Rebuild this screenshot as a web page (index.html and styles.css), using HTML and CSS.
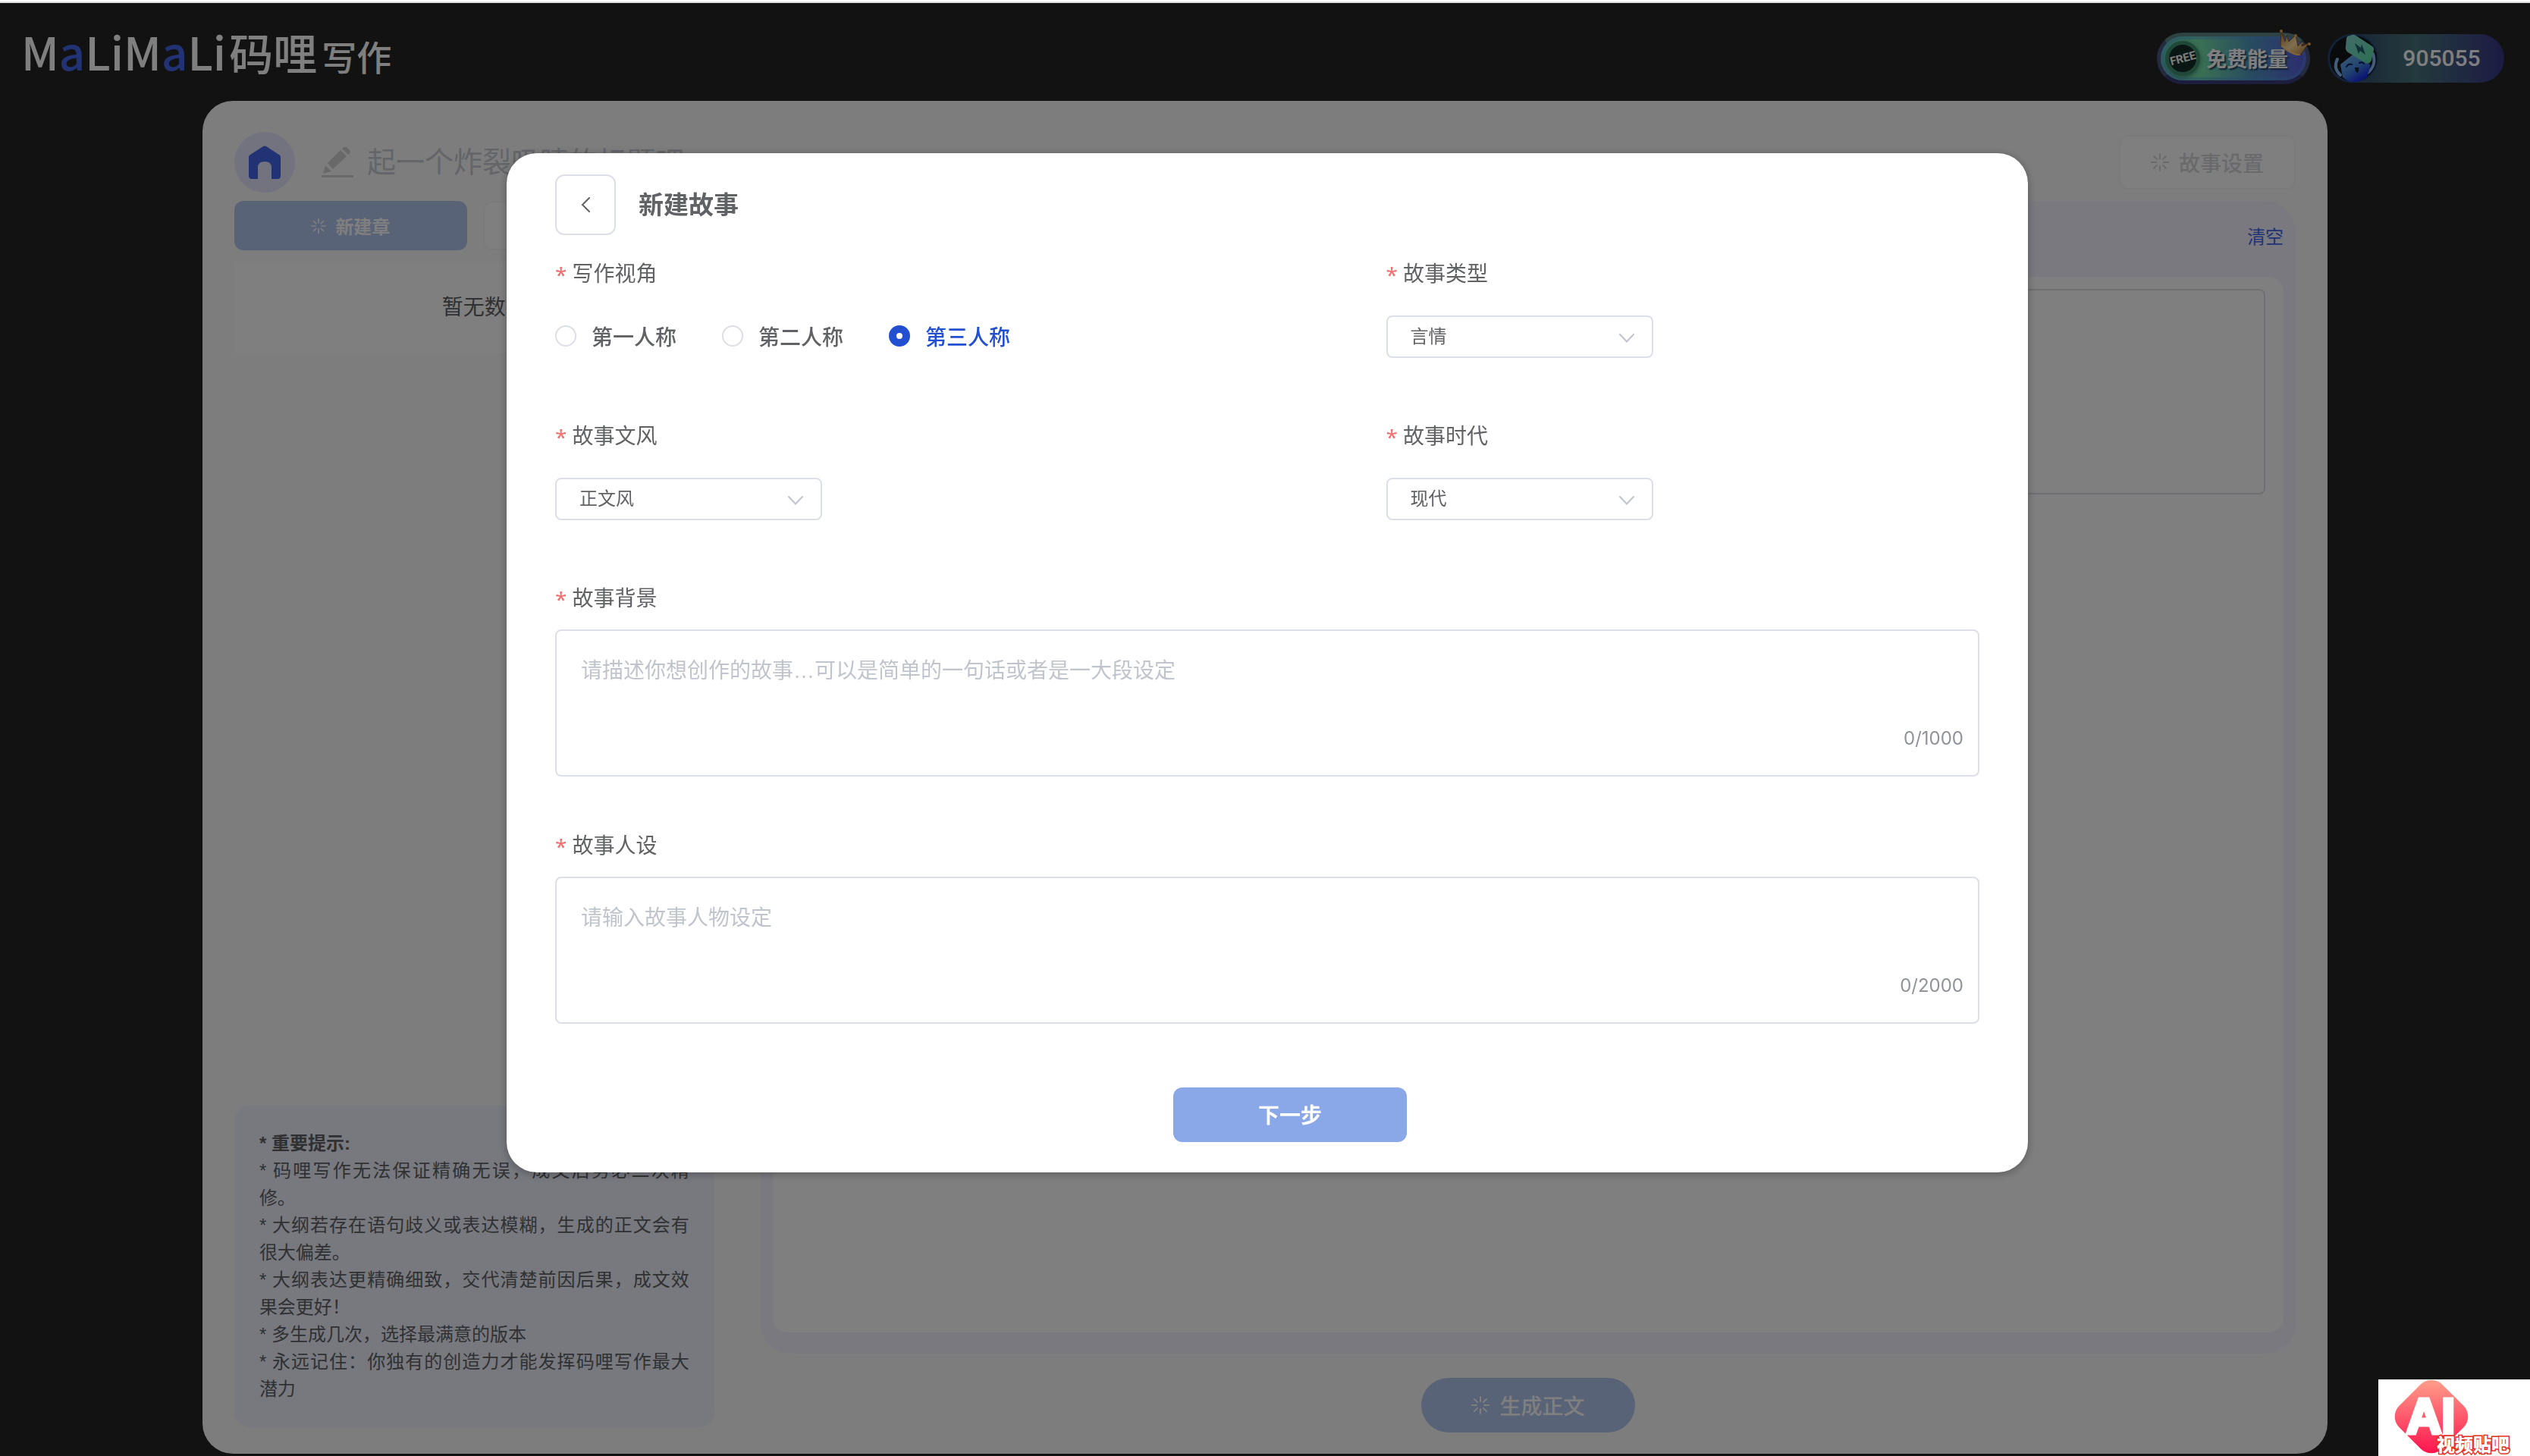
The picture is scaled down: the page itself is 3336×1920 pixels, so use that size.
FILE: index.html
```html
<!DOCTYPE html>
<html lang="zh-CN">
	<head>
		<meta charset="utf-8" />
		<meta name="viewport" content="width=device-width,initial-scale=1.0" />
		<title>码哩写作</title>
		<link rel="stylesheet" href="styles.css">
	</head>
	<body>
		<!-- 转圈图标，按钮共用 -->
		<svg class="defs" width="0" height="0" aria-hidden="true">
			<symbol id="loading" viewBox="0 0 24 24">
				<path d="M12 1v6M12 17v6M1 12h6M17 12h6M4 4l4 4M16 16l4 4M20 4l-4 4M8 16l-4 4" fill="none" stroke="currentColor" stroke-width="2" stroke-linecap="round" />
			</symbol>
			<symbol id="arrow" viewBox="0 0 20 12">
				<path d="M1 1l9 9.500l9-9.500" fill="none" stroke="currentColor" stroke-width="2" stroke-linecap="round" />
			</symbol>
		</svg>
		<div class="top-line"></div>

		<header class="header">
			<h1 class="logo">M<b>a</b>LiM<b>a</b>Li<span class="logo-cn">码哩</span><span class="logo-sub">写作</span></h1>
			<div class="header-right">
				<button class="free" type="button">
					<span class="free-coin"><span class="free-word">FREE</span></span>
					<span class="free-text">免费能量</span>
					<svg class="crown" viewBox="0 0 42 34" aria-hidden="true">
						<defs>
							<linearGradient id="gold" x1="0" y1="0" x2="1" y2="1">
								<stop offset="0" stop-color="#b87c38" />
								<stop offset="0.5" stop-color="#ffe0a0" />
								<stop offset="1" stop-color="#b06c28" />
							</linearGradient>
						</defs>
						<path d="M2 20L3 3l5 13l2-9l3 9l9-9l3 15l5-6l0 6l9-4l-11 16q-14-2-26-14z" fill="url(#gold)" stroke="#8a5420" />
						<path d="M3 21q11 11 25 13" fill="none" stroke="#ffc878" stroke-width="2" />
						<g fill="#e8a858"><circle cx="3" cy="2" r="2" /><circle cx="22" cy="8" r="2" /><circle cx="40" cy="19" r="2" /><circle cx="9" cy="7" r="1" /><circle cx="31" cy="18" r="1" /></g>
					</svg>
				</button>
				<div class="energy">
					<svg class="avatar" viewBox="0 0 68 64" aria-hidden="true">
						<defs>
							<linearGradient id="face" x1="0" y1="0" x2="0.700" y2="1">
								<stop offset="0" stop-color="#78b8e8" />
								<stop offset="0.550" stop-color="#4488e0" />
								<stop offset="1" stop-color="#1020e8" />
							</linearGradient>
							<linearGradient id="card" x1="0" y1="0" x2="1" y2="1">
								<stop offset="0" stop-color="#88d8d8" />
								<stop offset="1" stop-color="#58e0a0" />
							</linearGradient>
						</defs>
						<ellipse cx="34" cy="32" rx="32" ry="31" fill="#101418" stroke="#244878" stroke-width="2" />
						<path d="M13 33q-6 12 4 21M60 26q5 15-7 25" fill="none" stroke="#88b8f0" stroke-width="4" stroke-linecap="round" />
						<path d="M17 40L32 28q4-2 8 1l15 10q2 2 1 5l-4 13q-18 12-32 0z" fill="url(#face)" />
						<path d="M25 5q1-3 5-3q4-3 9 1l20 13q3 2 2 5l-3 13q-2 6-8 4L27 24q-4-3-3-8z" fill="url(#card)" />
						<path d="M36 12l8 6l1-5l5 14l-7-5l-2 4z" fill="#206070" />
						<path d="M25 43q3-5 7-3M42 38q4-2 6 1" fill="none" stroke="#102060" stroke-width="2" stroke-linecap="round" />
						<path d="M36 44l5 0q1 6-2 7q-3-2-3-7z" fill="#102030" />
					</svg>
					<span class="energy-num">905055</span>
				</div>
			</div>
		</header>

		<main class="page">
			<div class="title-row">
				<a class="home" href="#" aria-label="首页">
					<svg viewBox="0 0 44 44" aria-hidden="true">
						<path d="M1 15q0-2 2-3L20 1q2-1 4 0l17 11q2 1 2 3v25q0 4-4 4h-8V29q0-8-9-8t-9 8v15H5q-4 0-4-4z" fill="#4266ea" />
					</svg>
				</a>
				<svg class="pencil" viewBox="0 0 42 42" aria-hidden="true">
					<path d="M2 36L5 25l8 8zM8 22L25 5l8 8L15 30zM27 3q4-4 7-1l3 3q2 4-2 6z" fill="#d2d2d2" />
					<path d="M0 38h42v3H0z" fill="#d2d2d2" />
				</svg>
				<input class="title-input" type="text" aria-label="标题" placeholder="起一个炸裂吸睛的标题吧">
				<button class="btn-plain" type="button" disabled><svg class="load"><use href="#loading" /></svg>故事设置</button>
			</div>

			<div class="columns">
				<aside class="side">
					<div class="side-btns">
						<button class="btn-new" type="button" disabled><svg class="load"><use href="#loading" /></svg>新建章</button>
						<div class="side-blank"></div>
					</div>
					<div class="empty">暂无数据</div>
					<div class="tips">
						<p><strong>* 重要提示:</strong></p>
						<p>* 码哩写作无法保证精确无误，成文后务必二次精修。</p>
						<p>* 大纲若存在语句歧义或表达模糊，生成的正文会有很大偏差。</p>
						<p>* 大纲表达更精确细致，交代清楚前因后果，成文效果会更好！</p>
						<p>* 多生成几次，选择最满意的版本</p>
						<p>* 永远记住：你独有的创造力才能发挥码哩写作最大潜力</p>
					</div>
				</aside>
				<section class="work">
					<div class="editor">
						<div class="editor-head"><a href="#">清空</a></div>
						<div class="editor-body">
							<textarea class="editor-text" aria-label="正文"></textarea>
						</div>
					</div>
					<button class="btn-make" type="button" disabled><svg class="load"><use href="#loading" /></svg>生成正文</button>
				</section>
			</div>
		</main>

		<!-- 新建故事弹窗 -->
		<div class="mask">
			<form class="dialog" role="dialog" aria-labelledby="dialog-title">
				<div class="dialog-head">
					<button class="back" type="button" aria-label="返回">
						<svg viewBox="0 0 12 20" aria-hidden="true"><path d="M11 1L2 10l9 9" fill="none" stroke="currentColor" stroke-width="2" stroke-linecap="round" /></svg>
					</button>
					<h2 id="dialog-title">新建故事</h2>
				</div>

				<div class="fields">
					<fieldset class="field">
						<legend class="label">写作视角</legend>
						<div class="radios">
							<label class="radio"><input type="radio" name="view">第一人称</label>
							<label class="radio"><input type="radio" name="view">第二人称</label>
							<label class="radio"><input type="radio" name="view" checked>第三人称</label>
						</div>
					</fieldset>
					<div class="field">
						<label class="label" for="type">故事类型</label>
						<div class="select">
							<select id="type"><option>言情</option></select>
							<svg class="arrow"><use href="#arrow" /></svg>
						</div>
					</div>
					<div class="field">
						<label class="label" for="style">故事文风</label>
						<div class="select">
							<select id="style"><option>正文风</option></select>
							<svg class="arrow"><use href="#arrow" /></svg>
						</div>
					</div>
					<div class="field">
						<label class="label" for="era">故事时代</label>
						<div class="select">
							<select id="era"><option>现代</option></select>
							<svg class="arrow"><use href="#arrow" /></svg>
						</div>
					</div>
				</div>

				<div class="long-fields">
					<div>
						<label class="label" for="background">故事背景</label>
						<div class="area">
							<textarea id="background" maxlength="1000" placeholder="请描述你想创作的故事…可以是简单的一句话或者是一大段设定"></textarea>
							<span class="count">0/1000</span>
						</div>
					</div>
					<div>
						<label class="label" for="people">故事人设</label>
						<div class="area">
							<textarea id="people" maxlength="2000" placeholder="请输入故事人物设定"></textarea>
							<span class="count">0/2000</span>
						</div>
					</div>
				</div>

				<button class="btn-next" type="button">下一步</button>
			</form>
		</div>

		<svg class="watermark" viewBox="0 0 200 101" role="img" aria-label="AI视频贴吧">
			<defs>
				<linearGradient id="red" x1="0" y1="0" x2="1" y2="1">
					<stop offset="0.100" stop-color="#ff9a88" />
					<stop offset="0.900" stop-color="#ff1850" />
				</linearGradient>
			</defs>
			<rect width="200" height="101" fill="#fff" />
			<rect x="30" y="9" width="80" height="80" rx="20" fill="url(#red)" transform="rotate(45 70 49)" />
			<text class="mark-ai" x="37" y="71">AI</text>
			<text class="mark-name" x="77" y="95">视频贴吧</text>
		</svg>
	</body>
</html>
```

FILE: styles.css
```css
* {
	padding: 0;
	margin: 0;
	box-sizing: border-box;
}

body {
	display: flex;
	flex-direction: column;
	min-height: 100vh;
	background: #242424;
	color: #606266;
	font-family: "Liberation Sans", "Noto Sans CJK SC", sans-serif;
	font-size: 28px;
}

button, input, select, textarea {
	font-family: inherit;
	color: inherit;
}

button {
	display: flex;
	align-items: center;
	justify-content: center;
	border: none;
}

a {
	text-decoration: none;
}

.defs {
	position: absolute;
}

.top-line {
	height: 4px;
	background: #e0e0e0;
	border-top: 2px solid #fff;
}

/* 顶部 */
.header {
	display: flex;
	align-items: center;
	justify-content: space-between;
	height: 129px;
	padding: 16px 34px 0 28px;
}

.logo {
	display: flex;
	align-items: baseline;
	height: 88px;
	color: #fff;
	font: 500 60px/68px "Noto Sans CJK SC", sans-serif;
}

.logo b {
	color: #4266ea;
	font-weight: 500;
}

.logo-cn {
	margin-left: 4px;
	font-size: 58px;
}

.logo-sub {
	margin-left: 6px;
	font-size: 46px;
}

.header-right {
	display: flex;
	align-items: center;
	gap: 23px;
}

.free {
	position: relative;
	justify-content: flex-start;
	width: 202px;
	height: 68px;
	padding-left: 6px;
	gap: 8px;
	border: 5px solid #4a6080;
	border-color: #5e8486 #4a5880 #3a3a7a;
	border-radius: 34px;
	background: linear-gradient(90deg, #66d8c8, #74e0a8 28%, #5098c0 62%, #5a5ae0);
	box-shadow: inset 0 0 0 4px rgba(80, 150, 220, 0.4);
}

.free-coin {
	display: flex;
	align-items: center;
	justify-content: center;
	width: 46px;
	height: 46px;
	border: 5px solid #409070;
	border-radius: 50%;
	background: #142c28;
	box-shadow: 0 2px 6px rgba(0, 0, 0, 0.4);
}

.free-word {
	color: #fff;
	font: 700 15px/18px Roboto, sans-serif;
	transform: rotate(-15deg);
}

.free-text {
	color: #fff;
	font-size: 27px;
	font-weight: 700;
	text-shadow: 2px 2px 2px #204060;
}

.crown {
	position: absolute;
	top: -9px;
	right: -6px;
	width: 42px;
	height: 34px;
}

.energy {
	display: flex;
	align-items: center;
	width: 233px;
	height: 64px;
	border-radius: 32px;
	background: linear-gradient(90deg, #283c60, #48747c 50%, #383688);
}

.avatar {
	width: 68px;
	height: 64px;
}

.energy-num {
	flex: 1;
	color: #fff;
	font: 500 30px/40px Roboto, sans-serif;
	text-align: center;
}

/* 主体 */
.page {
	flex: 1;
	display: flex;
	flex-direction: column;
	margin: 0 8% 3px;
	padding: 41px 42px 28px;
	border-radius: 40px;
	background: #fbfbfb;
}

.title-row {
	display: flex;
	align-items: center;
	margin-bottom: 11px;
}

.home {
	display: flex;
	align-items: center;
	justify-content: center;
	width: 80px;
	height: 80px;
	margin-right: 35px;
	border-radius: 50%;
	background: #e6e4ff;
}

.home svg {
	width: 44px;
	height: 44px;
}

.pencil {
	width: 42px;
	height: 42px;
	margin-right: 18px;
}

.title-input {
	flex: 1;
	height: 60px;
	border: none;
	background: none;
	font-size: 38px;
}

.title-input::placeholder {
	color: #c8cad2;
}

.load {
	width: 24px;
	height: 24px;
	margin-right: 13px;
}

.btn-plain {
	width: 233px;
	height: 72px;
	border: 2px solid #f4f4f6;
	border-radius: 12px;
	background: #fff;
	color: #d4d5d8;
	font-size: 28px;
	font-weight: 500;
}

.columns {
	flex: 1;
	display: flex;
	gap: 34px;
}

.side {
	display: flex;
	flex-direction: column;
	width: 660px;
	padding-bottom: 7px;
}

.side-btns {
	display: flex;
	gap: 21px;
	margin: 0 27px 16px 0;
}

.btn-new {
	width: 307px;
	height: 65px;
	border-radius: 12px;
	background: #b2c6ee;
	color: #fff;
	font-size: 24px;
	font-weight: 700;
}

.btn-new .load {
	width: 20px;
	height: 20px;
	margin-right: 12px;
}

.side-blank {
	flex: 1;
	border: 2px solid #f4f4f6;
	border-radius: 12px;
	background: #fff;
}

.empty {
	height: 120px;
	background: #fff;
	line-height: 120px;
	text-align: center;
}

.tips {
	margin: auto 27px 0 0;
	padding: 32px 33px;
	border-radius: 20px;
	background: #f0f2ff;
	font-size: 24px;
	line-height: 36px;
	text-align: justify;
	text-spacing-trim: space-all;
}

.work {
	flex: 1;
	display: flex;
	flex-direction: column;
	gap: 32px;
}

.editor {
	flex: 1;
	display: flex;
	flex-direction: column;
	padding: 0 16px 28px;
	border-radius: 40px;
	background: #f4f2ff;
}

.editor-head {
	height: 100px;
	font-size: 24px;
	line-height: 96px;
	text-align: right;
}

.editor-head a {
	color: #4266ea;
}

.editor-body {
	flex: 1;
	padding: 16px 24px;
	border-radius: 20px;
	background: #fff;
}

.editor-text {
	display: block;
	width: 100%;
	height: 271px;
	border: 2px solid #dcdfe6;
	border-radius: 8px;
	background: #fff;
	resize: none;
}

.btn-make {
	align-self: center;
	width: 282px;
	height: 72px;
	border-radius: 36px;
	background: #b2c6ee;
	color: #fff;
	font-size: 28px;
	font-weight: 500;
}

/* 弹窗 */
.mask {
	position: fixed;
	top: 4px;
	right: 0;
	bottom: 0;
	left: 0;
	padding: 198px 0 0 6px;
	background: rgba(0, 0, 0, 0.5);
}

.dialog {
	width: 90%;
	max-width: 2006px;
	margin: 0 auto;
	padding: 28px 64px 40px;
	border-radius: 40px;
	background: #fff;
	box-shadow: 0 2px 12px rgba(0, 0, 0, 0.3);
}

.dialog-head {
	display: flex;
	align-items: center;
	gap: 30px;
	margin-bottom: 32px;
}

.dialog-head h2 {
	padding-bottom: 4px;
	font-size: 33px;
}

.back {
	width: 80px;
	height: 80px;
	border: 2px solid #dcdfe6;
	border-radius: 12px;
	background: #fff;
}

.back svg {
	width: 12px;
	height: 20px;
}

.fields {
	display: grid;
	grid-template-columns: 7fr 5fr;
	row-gap: 84px;
	margin-bottom: 84px;
}

.field {
	border: none;
}

.label {
	display: flex;
	align-items: center;
	gap: 7px;
	height: 40px;
	line-height: 40px;
}

.label::before {
	content: "*";
	color: #f56c6c;
	font-family: "Noto Sans", sans-serif;
}

.radios {
	display: flex;
	gap: 60px;
	margin-top: 34px;
}

.radio {
	display: flex;
	align-items: center;
	gap: 20px;
	height: 56px;
	padding-bottom: 2px;
	font-weight: 500;
}

.radio input {
	width: 28px;
	height: 28px;
	appearance: none;
	border: 2px solid #dcdfe6;
	border-radius: 50%;
	background: #fff;
}

.radio input:checked {
	border: 10px solid #2250d0;
}

.radio:has(input:checked) {
	color: #2250d0;
}

.select {
	position: relative;
	width: 352px;
	margin-top: 34px;
}

.select select {
	display: block;
	width: 100%;
	height: 56px;
	padding: 0 60px 2px 30px;
	appearance: none;
	border: 2px solid #dcdfe6;
	border-radius: 8px;
	background: #fff;
	font-size: 24px;
}

.arrow {
	position: absolute;
	top: 24px;
	right: 25px;
	width: 20px;
	height: 12px;
	color: #c0c4cc;
	pointer-events: none;
}

.long-fields {
	display: grid;
	gap: 72px;
	margin-bottom: 84px;
}

.area {
	position: relative;
	margin-top: 20px;
}

.area textarea {
	display: block;
	width: 100%;
	height: 194px;
	padding: 32px;
	border: 2px solid #dcdfe6;
	border-radius: 8px;
	font-size: 28px;
	line-height: 42px;
	resize: none;
}

.area textarea::placeholder {
	color: #c0c4cc;
}

.count {
	position: absolute;
	right: 21px;
	bottom: 36px;
	color: #909399;
	font: 24px/28px Inter, sans-serif;
}

.btn-next {
	width: 308px;
	height: 72px;
	margin-left: calc(50% - 124px);
	padding-bottom: 2px;
	border-radius: 12px;
	background: #8aa8e7;
	color: #fff;
	font-size: 28px;
	font-weight: 700;
}

/* 右下角水印 */
.watermark {
	position: fixed;
	right: 0;
	bottom: 0;
	width: 200px;
	height: 101px;
}

.mark-ai {
	fill: #fff;
	font: 700 64px "Liberation Sans", sans-serif;
	stroke: #fff;
	stroke-width: 5px;
}

.mark-name {
	fill: #fff;
	font: 900 24px "Noto Sans CJK SC", sans-serif;
	stroke: #e03020;
	stroke-width: 3px;
	paint-order: stroke;
}
```
